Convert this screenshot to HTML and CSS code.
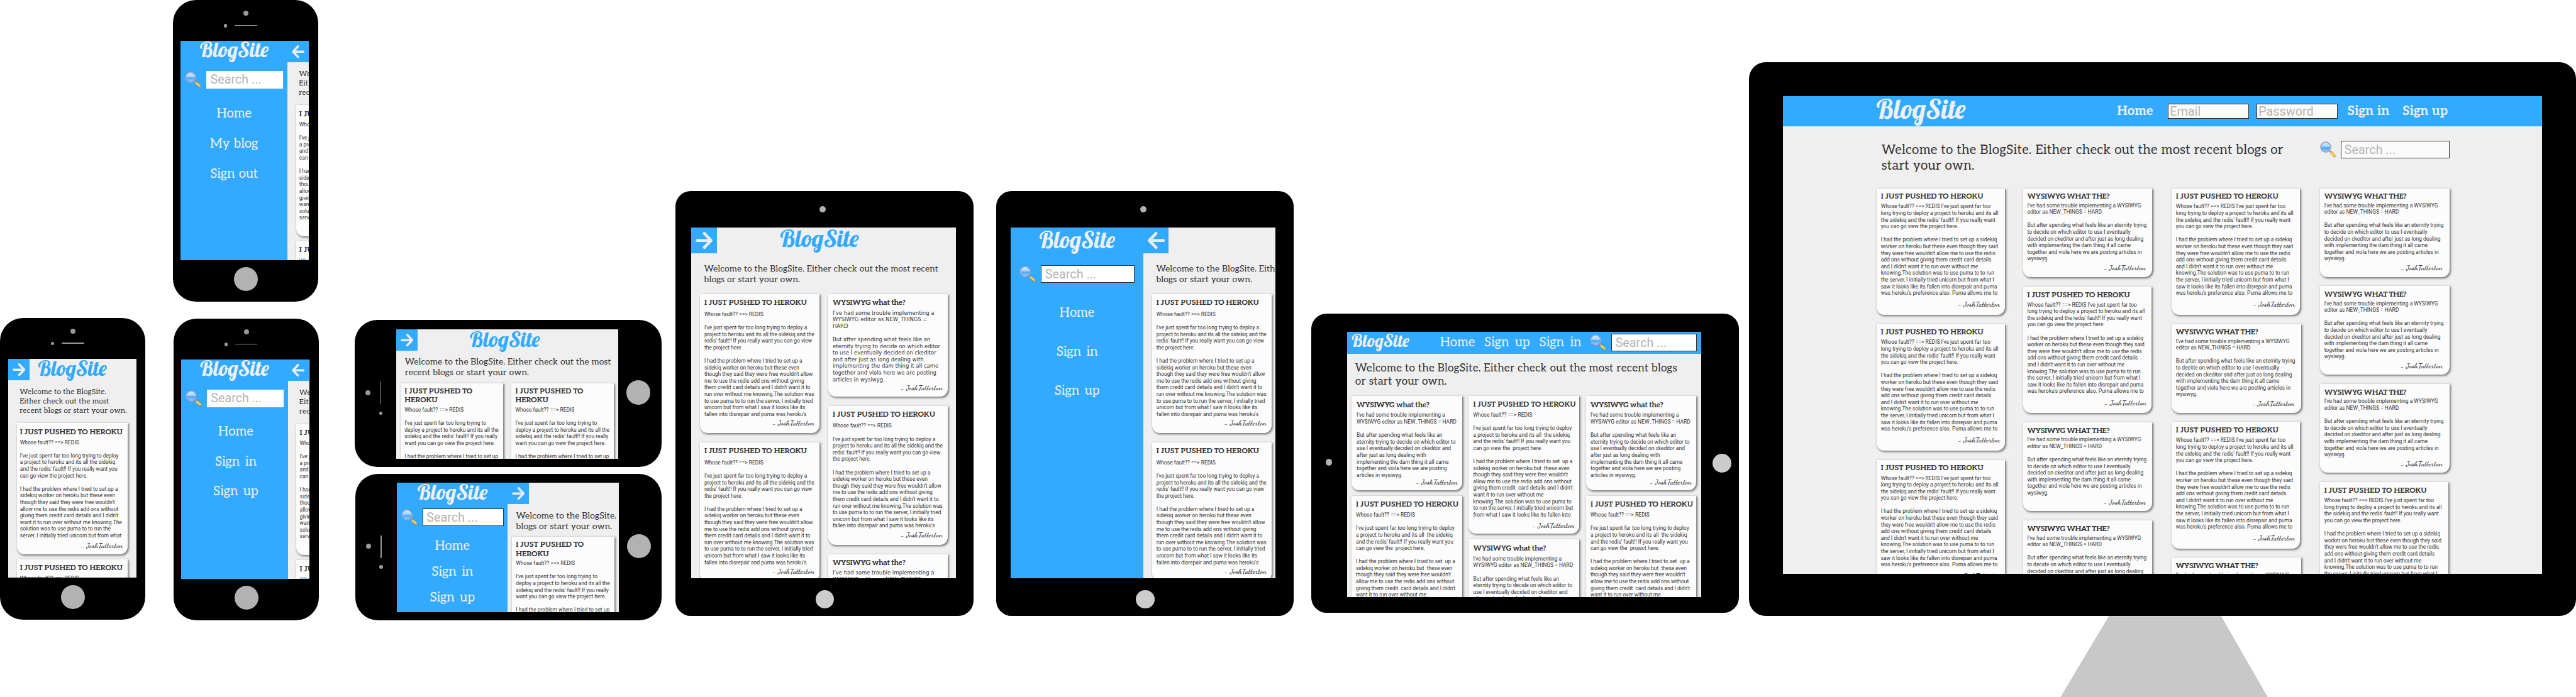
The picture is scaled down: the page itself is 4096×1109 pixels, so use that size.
FILE: index.html
```html
<!DOCTYPE html>
<html lang="en">
<head>
<meta charset="utf-8">
<title>BlogSite responsive layouts</title>
<link rel="stylesheet" href="styles.css">
</head>
<body>
<svg class="defs" aria-hidden="true">
  <defs>
    <linearGradient id="lens" x1="0" y1="0" x2="0" y2="1"><stop offset="0" stop-color="#d4efff"/><stop offset=".46" stop-color="#9ad4ff"/><stop offset=".54" stop-color="#4ba3fa"/><stop offset="1" stop-color="#8fd6ff"/></linearGradient>
    <linearGradient id="grip" x1="0" y1="1" x2="1" y2="0"><stop offset="0" stop-color="#e88a00"/><stop offset=".5" stop-color="#ffe27a"/><stop offset="1" stop-color="#f09a10"/></linearGradient>
    <symbol id="search" viewBox="0 0 38 38">
      <path d="M21.500 21.500l4 4" stroke="#9a93b8" stroke-width="3"/>
      <circle cx="13.200" cy="13.200" r="11.600" fill="url(#lens)" stroke="#8d88b4" stroke-width="2.400"/>
      <circle cx="13.200" cy="13.200" r="11.500" fill="none" stroke="#d5d3e6" stroke-width=".8"/>
      <rect x="-2.800" y="-8" width="5.600" height="15.500" rx="1.800" transform="translate(30.300 30.100) rotate(-45)" fill="url(#grip)" stroke="#a8690f" stroke-width=".7"/>
    </symbol>
    <symbol id="arrow" viewBox="10 10.500 30 30">
      <path d="M12.700 25.500H37.300M25.500 13.200L37.300 25.500L25.500 37.800" fill="none" stroke="#ebebeb" stroke-width="5.200" stroke-linecap="round" stroke-linejoin="round"/>
    </symbol>
  </defs>
</svg>
<main class="showcase">

  <section class="device phone phone-a">
    <i class="camera"></i><i class="sensor"></i><i class="speaker"></i>
    <div class="screen">
      <aside class="side">
        <div class="logo">BlogSite</div>
        <div class="search"><svg><use href="#search"/></svg><span class="field">Search ...</span></div>
        <nav><a>Home</a><a>My blog</a><a>Sign out</a></nav>
      </aside>
      <div class="page">
        <header class="top"><span class="toggle back"><svg><use href="#arrow"/></svg></span></header>
        <p class="welcome">Welcome to the BlogSite.
Either check out the most
recent blogs or start your own.</p>
        <div class="cols"><div class="col"><article class="card j" data-post="phone"></article><article class="card j link" data-post="phone"></article></div></div>
      </div>
    </div>
    <i class="home"></i>
  </section>

  <section class="device phone phone-b">
    <i class="camera"></i><i class="sensor"></i><i class="speaker"></i>
    <div class="screen">
      <div class="page">
        <header class="top"><span class="toggle"><svg><use href="#arrow"/></svg></span><div class="logo">BlogSite</div></header>
        <p class="welcome">Welcome to the BlogSite.
Either check out the most
recent blogs or start your own.</p>
        <div class="cols"><div class="col"><article class="card j" data-post="phone"></article><article class="card j" data-post="phone"></article></div></div>
      </div>
    </div>
    <i class="home"></i>
  </section>

  <section class="device phone phone-c">
    <i class="camera"></i><i class="sensor"></i><i class="speaker"></i>
    <div class="screen">
      <aside class="side">
        <div class="logo">BlogSite</div>
        <div class="search"><svg><use href="#search"/></svg><span class="field">Search ...</span></div>
        <nav><a>Home</a><a>Sign in</a><a>Sign up</a></nav>
      </aside>
      <div class="page">
        <header class="top"><span class="toggle back"><svg><use href="#arrow"/></svg></span></header>
        <p class="welcome">Welcome to the BlogSite.
Either check out the most
recent blogs or start your own.</p>
        <div class="cols"><div class="col"><article class="card j" data-post="phone"></article><article class="card j link" data-post="phone"></article></div></div>
      </div>
    </div>
    <i class="home"></i>
  </section>

  <section class="device wide wide-d">
    <i class="camera"></i><i class="sensor"></i><i class="speaker"></i>
    <div class="screen">
      <div class="page">
        <header class="top"><span class="toggle"><svg><use href="#arrow"/></svg></span><div class="logo">BlogSite</div></header>
        <p class="welcome">Welcome to the BlogSite. Either check out the most
recent blogs or start your own.</p>
        <div class="cols"><div class="col"><article class="card j" data-post="wide"></article></div><div class="col"><article class="card j" data-post="wide"></article></div></div>
      </div>
    </div>
    <i class="home"></i>
  </section>

  <section class="device wide wide-e">
    <i class="camera"></i><i class="sensor"></i><i class="speaker"></i>
    <div class="screen">
      <aside class="side">
        <div class="logo">BlogSite</div>
        <div class="search"><svg><use href="#search"/></svg><span class="field">Search ...</span></div>
        <nav><a>Home</a><a>Sign in</a><a>Sign up</a></nav>
      </aside>
      <div class="page">
        <header class="top"><span class="toggle"><svg><use href="#arrow"/></svg></span></header>
        <p class="welcome">Welcome to the BlogSite. Either check out the most recent
blogs or start your own.</p>
        <div class="cols"><div class="col"><article class="card j" data-post="wide"></article></div></div>
      </div>
    </div>
    <i class="home"></i>
  </section>

  <section class="device tablet tablet-f">
    <i class="camera"></i>
    <div class="screen">
      <div class="page">
        <header class="top"><span class="toggle"><svg><use href="#arrow"/></svg></span><div class="logo">BlogSite</div></header>
        <p class="welcome">Welcome to the BlogSite. Either check out the most recent
blogs or start your own.</p>
        <div class="cols">
          <div class="col"><article class="card j" data-post="tablet"></article><article class="card j" data-post="tablet"></article></div>
          <div class="col"><article class="card w" data-post="tabletEditor"></article><article class="card j" data-post="tablet"></article><article class="card w" data-post="tabletEditor"></article></div>
        </div>
      </div>
    </div>
    <i class="home"></i>
  </section>

  <section class="device tablet tablet-g">
    <i class="camera"></i>
    <div class="screen">
      <aside class="side">
        <div class="logo">BlogSite</div>
        <div class="search"><svg><use href="#search"/></svg><span class="field">Search ...</span></div>
        <nav><a>Home</a><a>Sign in</a><a>Sign up</a></nav>
      </aside>
      <div class="page">
        <header class="top"><span class="toggle back"><svg><use href="#arrow"/></svg></span></header>
        <p class="welcome">Welcome to the BlogSite. Either check out the most recent
blogs or start your own.</p>
        <div class="cols"><div class="col"><article class="card j" data-post="tablet"></article><article class="card j" data-post="tablet"></article></div></div>
      </div>
    </div>
    <i class="home"></i>
  </section>

  <section class="device slate">
    <i class="camera"></i>
    <div class="screen">
      <div class="page">
        <header class="bar">
          <div class="logo">BlogSite</div>
          <nav><a>Home</a><a>Sign up</a><a>Sign in</a></nav>
          <div class="search"><svg><use href="#search"/></svg><span class="field">Search ...</span></div>
        </header>
        <p class="welcome">Welcome to the BlogSite. Either check out the most recent blogs
or start your own.</p>
        <div class="cols">
          <div class="col"><article class="card w" data-post="slateEditor"></article><article class="card j" data-post="slate"></article></div>
          <div class="col"><article class="card j" data-post="slate"></article><article class="card w" data-post="slateEditor"></article></div>
          <div class="col"><article class="card w" data-post="slateEditor"></article><article class="card j" data-post="slate"></article></div>
        </div>
      </div>
    </div>
    <i class="home"></i>
  </section>

  <section class="device monitor">
    <div class="screen">
      <div class="page">
        <header class="bar">
          <div class="logo">BlogSite</div>
          <nav><a>Home</a><span class="field email">Email</span><span class="field password">Password</span><a>Sign in</a><a>Sign up</a></nav>
        </header>
        <div class="intro">
          <p class="welcome">Welcome to the BlogSite. Either check out the most recent blogs or
start your own.</p>
          <div class="search"><svg><use href="#search"/></svg><span class="field">Search ...</span></div>
        </div>
        <div class="cols">
          <div class="col"><article class="card j" data-post="desk"></article><article class="card j" data-post="desk"></article><article class="card j" data-post="desk"></article></div>
          <div class="col"><article class="card w" data-post="deskEditor"></article><article class="card j" data-post="desk"></article><article class="card w" data-post="deskEditor"></article><article class="card w" data-post="deskEditor"></article></div>
          <div class="col"><article class="card j" data-post="desk"></article><article class="card w" data-post="deskEditor"></article><article class="card j" data-post="desk"></article><article class="card w" data-post="deskEditor"></article></div>
          <div class="col"><article class="card w" data-post="deskEditor"></article><article class="card w" data-post="deskEditor"></article><article class="card w" data-post="deskEditor"></article><article class="card j" data-post="desk"></article></div>
        </div>
      </div>
    </div>
  </section>
  <i class="stand"></i>
</main>
<script src="posts.js"></script>
</body>
</html>
```
FILE: styles.css
```css
/* 1rem = 10 units of a 6042 x 1636 board */
html { font-size: calc(4096px / 604.2); }
* { box-sizing: border-box; }
body { margin: 0; background: #fff; color: #333; font-family: Roboto, sans-serif; overflow: hidden; }
p, h2 { margin: 0; }
i { display: block; }
.defs { position: absolute; width: 0; height: 0; }
.showcase { position: relative; width: 604.2rem; height: 163.6rem; overflow: hidden; }

/* devices */
.device { position: absolute; background: #000; display: flex; }
.camera, .sensor, .speaker, .home { position: absolute; background: #999; border-radius: 50%; }
.home { background: #b2b2b2; }
.screen { display: flex; overflow: hidden; background: #efefef; }
.page { flex: none; display: flex; flex-direction: column; }

.phone { width: 34.1rem; height: 70.8rem; border-radius: 5.4rem; padding: 9.6rem 0 0 1.8rem; }
.phone-a { left: 40.6rem; top: 0; }
.phone-b { left: 0; top: 74.6rem; padding-left: 1.9rem; }
.phone-c { left: 40.7rem; top: 74.8rem; }
.phone .screen { width: 30.1rem; height: 51.4rem; }
.phone .page { width: 30.1rem; }
.phone .camera { left: 16.5rem; top: 2.5rem; width: 1.2rem; height: 1.2rem; }
.phone .sensor { left: 11.9rem; top: 5.65rem; width: .8rem; height: .8rem; }
.phone .speaker { left: 14.4rem; top: 5.85rem; width: 5.3rem; height: .2rem; border-radius: .1rem; }
.phone .home { left: 14.3rem; top: 62.7rem; width: 5.65rem; height: 5.65rem; }

.wide { width: 71.95rem; height: 34.5rem; border-radius: 5.3rem; padding: 2.2rem 0 0 9.8rem; }
.wide-d { left: 83.2rem; top: 75.1rem; }
.wide-e { left: 83.3rem; top: 111.15rem; }
.wide .screen { width: 52rem; height: 30.4rem; }
.wide .page { width: 52rem; }
.wide .camera { left: 2.5rem; top: 16.5rem; width: 1.2rem; height: 1.2rem; }
.wide .sensor { left: 5.7rem; top: 21.5rem; width: .8rem; height: .8rem; }
.wide .speaker { left: 6rem; top: 14.5rem; width: .2rem; height: 5.3rem; border-radius: .1rem; }
.wide .home { left: 63.7rem; top: 14.2rem; width: 5.7rem; height: 5.7rem; }

.tablet { width: 69.9rem; height: 99.7rem; border-radius: 3.6rem; padding: 8.54rem 0 0 3.65rem; top: 44.84rem; }
.tablet-f { left: 158.45rem; }
.tablet-g { left: 233.6rem; padding-left: 3.5rem; }
.tablet .screen { width: 62.05rem; height: 82.4rem; }
.tablet .page { width: 62.05rem; }
.tablet .camera { left: 33.8rem; top: 3.5rem; width: 1.5rem; height: 1.5rem; background: #b2b2b2; }
.tablet .home { left: 32.8rem; top: 93.6rem; width: 4.4rem; height: 4.4rem; background: #ccc; }

.slate { left: 307.5rem; top: 73.55rem; width: 100.3rem; height: 70.3rem; border-radius: 3.6rem; padding: 4.35rem 0 0 8.45rem; }
.slate .screen { width: 83rem; height: 62.3rem; }
.slate .page { width: 83rem; }
.slate .camera { left: 3.5rem; top: 34.2rem; width: 1.5rem; height: 1.5rem; background: #b2b2b2; }
.slate .home { left: 94.1rem; top: 32.9rem; width: 4.5rem; height: 4.5rem; background: #ccc; }

.monitor { left: 410.2rem; top: 14.6rem; width: 194rem; height: 130rem; border-radius: 3.9rem; padding: 8rem 0 0 8rem; }
.monitor .screen { width: 178rem; height: 112.1rem; }
.monitor .page { width: 178rem; }
.stand { position: absolute; left: 483.3rem; top: 144.6rem; width: 48.6rem; height: 19rem; background: #c8c8c8; clip-path: polygon(23.3% 0, 77.5% 0, 100% 100%, 0 100%); }

/* shared interface parts */
.logo { font-family: Lobster, cursive; color: #efefef; white-space: nowrap; }
.top .logo { color: #32aaff; }
.side { flex: none; background: #32aaff; display: flex; flex-direction: column; align-items: center; }
.side nav { display: flex; flex-direction: column; align-items: center; }
.side nav a, .bar nav a { font-family: "Roboto Slab", Aleo, "DejaVu Serif Condensed", serif; font-size: 3rem; line-height: 4rem; padding-top: .2rem; color: #efefef; white-space: nowrap; word-spacing: .5rem; }
.side nav a { margin-bottom: -.2rem; }
.search { display: flex; align-items: center; }
.search svg { flex: none; width: 3.85rem; height: 3.85rem; }
.field { background: #fff; color: #b5b5b5; font-size: 2.92rem; line-height: 4.25rem; height: 4.1rem; padding-left: .9rem; white-space: nowrap; }
.side .search { align-self: stretch; }
.side .field { flex: 1; }
.top { display: flex; height: 5rem; }
.toggle { flex: none; width: 5rem; height: 5rem; background: #32aaff; display: flex; align-items: center; justify-content: center; }
.toggle svg { width: 3rem; height: 3rem; }
.back svg { transform: scaleX(-1); }
.top .logo { flex: 1; text-align: center; margin-left: -5rem; }
.welcome { font-family: "Roboto Slab", Aleo, "DejaVu Serif Condensed", serif; white-space: pre; }

.cols { display: flex; }
.col { flex: none; display: flex; flex-direction: column; }
.card { flex: none; background: #fcfcfc; border-radius: 0 0 1.8rem 1.8rem; box-shadow: .15rem .2rem .5rem rgba(0, 0, 0, .5); }
.card h2 { font: bold 1.77rem/2.2rem "Roboto Slab", Aleo, "DejaVu Serif Condensed", serif; white-space: pre; padding-top: .13rem; margin-bottom: -.13rem; }
.w h2 { letter-spacing: -.06rem; }
.card p { font-size: 1.25rem; line-height: 1.563rem; white-space: pre; }
.card footer { font: 600 1.76rem/2.2rem "Dancing Script", cursive; text-align: right; }
.link p { color: #2d8fe0; }

/* phone, portrait */
.phone .logo { font-size: 4.9rem; line-height: 4.5rem; }
.phone .side { width: 25rem; }
.phone .side .logo { line-height: 4rem; }
.phone .side .search { margin-top: 3.05rem; padding: 0 1rem; gap: 1.2rem; }
.phone .side nav { margin-top: 3.8rem; gap: 3.1rem; }
.phone-a nav a { word-spacing: .15rem; }
.phone-c .side nav { margin: 3.7rem 0 0 .6rem; gap: 3.03rem; }
.phone .welcome { font-size: 1.76rem; letter-spacing: .02rem; line-height: 2.2rem; padding-left: 2.7rem; margin: 1.79rem 0 1.71rem; }
.phone .cols { padding-left: 2.05rem; }
.phone .col { width: 25.95rem; gap: 1.2rem; }
.phone .card { height: 30.75rem; padding: .97rem 1.1rem 0 .75rem; }
.phone .card p { margin-top: .6rem; }
.phone .card footer { margin-top: .5rem; }

/* phone, landscape */
.wide .logo { font-size: 5rem; line-height: 4.5rem; }
.wide .top .logo { padding-right: 1.2rem; }
.wide .side { width: 26rem; }
.wide .side .logo { line-height: 4.36rem; }
.wide .side .search { margin-top: 1.6rem; padding: 0 1rem; gap: 1.15rem; }
.wide .side nav { margin-top: 2.67rem; gap: 2.04rem; }
.wide .side .field { border: .1rem solid #333; padding-left: .8rem; line-height: 4.05rem; }
.wide .welcome { font-size: 2.05rem; letter-spacing: .017rem; line-height: 2.5rem; padding-left: 1.95rem; margin: 1.55rem 0 1.15rem; }
.wide .cols { padding-left: 1rem; gap: 2rem; }
.wide .col { width: 24rem; }
.wide .card { height: 40rem; padding: .7rem .9rem 0; }
.wide .card h2 { line-height: 2.16rem; }
.wide .card p { margin-top: .37rem; line-height: 1.57rem; }

/* tablet, portrait */
.tablet .logo { font-size: 5.6rem; line-height: 5.1rem; }
.tablet .top { height: 6rem; }
.tablet .toggle { width: 6rem; height: 6rem; }
.tablet .toggle svg { width: 4rem; height: 4rem; }
.tablet .top .logo { margin-left: -6rem; padding-right: 1.9rem; }
.tablet .side { width: 31.05rem; }
.tablet .side .logo { font-size: 5.4rem; line-height: 5.67rem; }
.tablet .side .search { margin-top: 3.25rem; padding: 0 2rem; gap: 1.15rem; }
.tablet .side .field { border: .1rem solid #333; line-height: 4.05rem; }
.tablet .side nav { margin-top: 4.98rem; gap: 5.1rem; }
.tablet .welcome { font-size: 2.05rem; letter-spacing: .016rem; line-height: 2.55rem; padding-left: 3.05rem; margin: 2.45rem 0 2.15rem; }
.tablet .cols { padding-left: 2.15rem; gap: 2.2rem; }
.tablet .col { width: 27.9rem; gap: 2.2rem; }
.tablet .card { padding: .87rem 1.15rem 0 .95rem; }
.tablet .j { height: 32.6rem; }
.tablet .w { height: 24rem; }
.tablet .j p { margin-top: .85rem; }
.tablet .j footer { margin-top: .3rem; }
.tablet .w p { margin-top: .53rem; font-family: "DejaVu Sans", sans-serif; }
.tablet .w footer { margin-top: .13rem; }

/* tablet, landscape */
.bar { display: flex; align-items: center; background: #32aaff; }
.bar nav { display: flex; align-items: center; margin-left: auto; }
.slate .bar { height: 6rem; padding: 0 1rem 0 1.05rem; }
.slate .logo { font-size: 4.1rem; line-height: 4rem; padding-bottom: 1.08rem; }
.slate .bar nav { gap: 2.2rem; margin-right: 2rem; }
.slate .bar nav a { word-spacing: .65rem; }
.slate .search { gap: 1.1rem; }
.slate .field { width: 20.1rem; border: .1rem solid #333; line-height: 4.05rem; }
.slate .welcome { font-size: 2.54rem; letter-spacing: .033rem; line-height: 3.1rem; padding-left: 1.9rem; margin: 1.8rem 0 1.95rem; }
.slate .cols { padding-left: 1.05rem; gap: 1.6rem; }
.slate .col { width: 25.9rem; gap: 1.4rem; }
.slate .card { padding: 1rem 1.15rem 0 1.05rem; }
.slate .j { height: 32.3rem; padding-top: .87rem; }
.slate .w { height: 22.1rem; }
.slate .col:first-child .w { padding: 1rem 1rem 0 1.2rem; }
.slate .j p { margin-top: .6rem; }
.slate .j footer { margin-top: .65rem; }
.slate .w p { margin-top: .56rem; }
.slate .w footer { margin-top: -.17rem; }

/* desktop */
.monitor .bar { height: 7.5rem; padding: 0 22.1rem 0 21.9rem; }
.monitor .logo { font-size: 6.35rem; line-height: 6rem; padding-bottom: 1.06rem; }
.monitor .bar nav a { font-weight: bold; word-spacing: .1rem; }
.monitor .field { background: #fbfbfb; border: .1rem solid #333; }
.monitor .bar .field { width: 19rem; height: 3.65rem; line-height: 3.5rem; padding-left: .3rem; }
.monitor .email { margin: 0 1.8rem 0 3.5rem; }
.monitor .password { margin-right: 2.3rem; }
.monitor nav a + a { margin-left: 3.05rem; }
.intro { display: flex; justify-content: space-between; align-items: flex-start; padding: 3.45rem 21.65rem 3.6rem 23.1rem; }
.monitor .welcome { font-size: 3.02rem; letter-spacing: .047rem; line-height: 3.74rem; margin: .2rem 0 -.2rem; }
.monitor .search { gap: 1.1rem; }
.monitor .search .field { width: 25.45rem; padding-left: .65rem; line-height: 4.05rem; }
.monitor .cols { padding-left: 22rem; display: grid; grid-template-columns: 34.35rem 34.85rem 34.8rem 30.3rem; }
.monitor .col { gap: 2.2rem; }
.monitor .col:nth-child(2) { gap: 2.25rem; }
.monitor .card { padding: .87rem 1.2rem 0 .95rem; width: 30.1rem; }
.monitor .j { height: 29.67rem; }
.monitor .w { height: 20.8rem; width: 30.3rem; padding-right: 1.6rem; }
.monitor .j p { margin-top: .46rem; }
.monitor .j footer { margin-top: .83rem; }
.monitor .w p { margin-top: .2rem; }
.monitor .w footer { margin-top: .3rem; }
```
FILE: posts.js
```js
// Post excerpts, broken into lines for each breakpoint's card width.
const heroku = "I JUST PUSHED TO HEROKU";
const posts = {
  phone: { title: heroku, body: `Whose fault?? ==> REDIS

I've just spent far too long trying to deploy
a project to heroku and its all the sidekiq
and the redis' fault!! If you really want you
can go view the project here.

I had the problem where I tried to set up a
sidekiq worker on heroku but these even
though they said they were free wouldn't
allow me to use the redis add ons without
giving them credit card details and I didn't
want it to run over without me knowing.The
solution was to use puma to to run the
server, I initially tried unicorn but from what` },
  wide: { title: "I JUST PUSHED TO\nHEROKU", body: `Whose fault?? ==> REDIS

I've just spent far too long trying to
deploy a project to heroku and its all the
sidekiq and the redis' fault!! If you really
want you can go view the project here.

I had the problem where I tried to set up` },
  tablet: { title: heroku, body: `Whose fault?? ==> REDIS

I've just spent far too long trying to deploy a
project to heroku and its all the sidekiq and the
redis' fault!! If you really want you can go view
the project here.

I had the problem where I tried to set up a
sidekiq worker on heroku but these even
though they said they were free wouldn't allow
me to use the redis add ons without giving
them credit card details and I didn't want it to
run over without me knowing.The solution was
to use puma to to run the server, I initially tried
unicorn but from what I saw it looks like its
fallen into disrepair and puma was heroku's` },
  tabletEditor: { title: "WYSIWYG what the?", body: `I've had some trouble implementing a
WYSIWYG editor as NEW_THINGS =
HARD

But after spending what feels like an
eternity trying to decide on which editor
to use I eventually decided on ckeditor
and after just as long dealing with
implementing the dam thing it all came
together and viola here we are posting
articles in wysiwyg.` },
  slate: { title: heroku, body: `Whose fault?? ==> REDIS

I've just spent far too long trying to deploy
a project to heroku and its all  the sidekiq
and the redis' fault!! If you really want you
can go view the  project here.

I had the problem where I tried to set  up a
sidekiq worker on heroku but  these even
though they said they were free wouldn't
allow me to use the redis add ons without
giving them credit  card details and I didn't
want it to run over without me
knowing.The solution was to use puma to
to run the server, I initially tried unicorn but
from what I saw it looks like its fallen into` },
  slateEditor: { title: "WYSIWYG what the?", body: `I've had some trouble implementing a
WYSIWYG editor as NEW_THINGS = HARD

But after spending what feels like an
eternity trying to decide on which editor to
use I eventually decided on ckeditor and
after just as long dealing with
implementing the dam thing it all came
together and viola here we are posting
articles in wysiwyg.` },
  desk: { title: heroku, body: `Whose fault?? ==> REDIS I've just spent far too
long trying to deploy a project to heroku and its all
the sidekiq and the redis' fault!! If you really want
you can go view the project here.

I had the problem where I tried to set up a sidekiq
worker on heroku but these even though they said
they were free wouldn't allow me to use the redis
add ons without giving them credit card details
and I didn't want it to run over without me
knowing.The solution was to use puma to to run
the server, I initially tried unicorn but from what I
saw it looks like its fallen into disrepair and puma
was heroku's preference also. Puma allows me to` },
  deskEditor: { title: "WYSIWYG WHAT THE?", body: `I've had some trouble implementing a WYSIWYG
editor as NEW_THINGS = HARD

But after spending what feels like an eternity trying
to decide on which editor to use I eventually
decided on ckeditor and after just as long dealing
with implementing the dam thing it all came
together and viola here we are posting articles in
wysiwyg.` },
};

for (const card of document.querySelectorAll(".card")) {
  const post = posts[card.dataset.post];
  const add = (tag, text) => {
    const el = document.createElement(tag);
    el.textContent = text;
    card.append(el);
  };
  add("h2", post.title);
  add("p", post.body);
  if (card.dataset.post !== "wide") add("footer", "- JoshTatterton");
}
```
